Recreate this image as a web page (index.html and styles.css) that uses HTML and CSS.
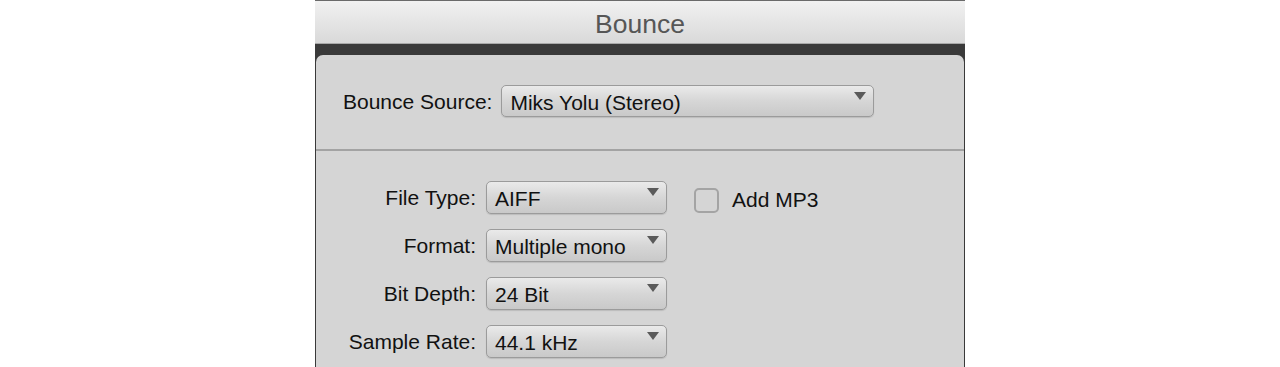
FILE: index.html
```html
<!DOCTYPE html>
<html lang="en">
    <head>
        <title>Bounce</title>
        <meta charset="utf-8" />
        <link rel="stylesheet" href="styles.css">
    </head>
    <body>
        <div class="window">
            <div class="titlebar">Bounce</div>
            <div class="panel">
                <div class="source">
                    <span class="label">Bounce Source:</span>
                    <div class="popup wide"><span>Miks Yolu (Stereo)</span><i class="arrow"></i></div>
                </div>
                <div class="options">
                    <span class="label right">File Type:</span>
                    <div class="popup"><span>AIFF</span><i class="arrow"></i></div>
                    <label class="check"><span class="box"></span>Add MP3</label>

                    <span class="label right">Format:</span>
                    <div class="popup"><span>Multiple mono</span><i class="arrow"></i></div>
                    <span></span>

                    <span class="label right">Bit Depth:</span>
                    <div class="popup"><span>24 Bit</span><i class="arrow"></i></div>
                    <span></span>

                    <span class="label right">Sample Rate:</span>
                    <div class="popup"><span>44.1 kHz</span><i class="arrow"></i></div>
                    <span></span>
                </div>
            </div>
        </div>
    </body>
</html>
```

FILE: styles.css
```css
body {
    margin: 0;
    padding: 0;
    background-color: #ffffff;
    font-family: "Liberation Sans", Arial, sans-serif;
    height: 367px;
    overflow: hidden;
}

/* window frame */
.window {
    width: 650px;
    margin: 0 auto;
    background-color: #3a3a3a;
    height: 367px;
    overflow: hidden;
}
.titlebar {
    height: 42px;
    border-top: 1px solid #6a6a6a;
    border-bottom: 1px solid #a9a9a9;
    background: linear-gradient(#f1f1f1, #d9d9d9);
    color: #565656;
    font-size: 26.5px;
    line-height: 46px;
    text-align: center;
}
.panel {
    margin: 11px 1px 0 1px;
    background-color: #d5d5d5;
    border-radius: 7px 7px 0 0;
    height: 330px;
}

/* top row */
.source {
    box-sizing: border-box;
    display: flex;
    align-items: flex-start;
    gap: 9px;
    padding: 30px 0 0 27px;
    height: 96px;
    border-bottom: 2px solid #a3a3a3;
}
.source .label {
    line-height: 32px;
    padding-top: 1px;
}
.label {
    font-size: 21px;
    color: #111;
}
.right {
    text-align: right;
}

/* popup menus */
.popup {
    box-sizing: border-box;
    display: flex;
    width: 181px;
    height: 33px;
    padding: 0 7px 0 8px;
    border: 1px solid #9b9b9b;
    border-radius: 5px;
    background: linear-gradient(#eaeaea, #d6d6d6 50%, #c9c9c9);
    box-shadow: 0 1px 1px rgba(0, 0, 0, 0.12);
    font-size: 21px;
    color: #111;
}
.popup span {
    align-self: center;
    padding-top: 3px;
}
.popup.wide {
    width: 373px;
    height: 32px;
}
.arrow {
    margin-left: auto;
    margin-top: 6px;
    width: 0;
    height: 0;
    border-left: 6.5px solid transparent;
    border-right: 6.5px solid transparent;
    border-top: 8px solid #5a5a5a;
}

/* lower grid */
.options {
    display: grid;
    grid-template-columns: 160px 181px auto;
    column-gap: 10px;
    row-gap: 15px;
    align-items: center;
    padding-top: 30px;
}
.check {
    display: flex;
    align-items: center;
    gap: 13px;
    margin-left: 17px;
    margin-top: 5px;
    font-size: 21px;
    color: #111;
}
.box {
    box-sizing: border-box;
    width: 25px;
    height: 25px;
    border: 2px solid #a4a4a4;
    border-radius: 5px;
}
```
